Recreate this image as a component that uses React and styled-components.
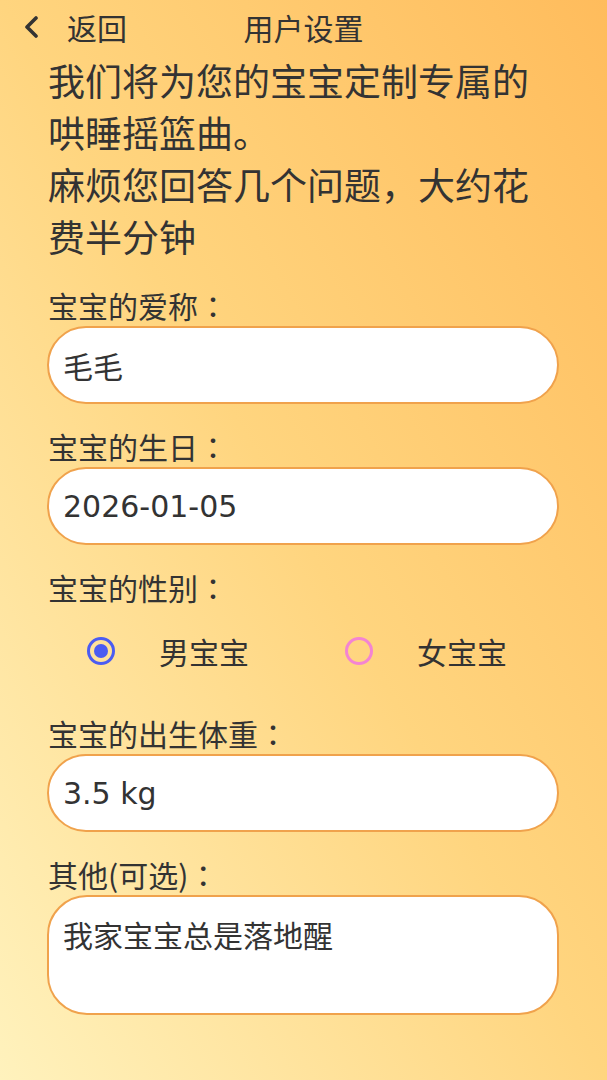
import React from 'react'
import styled, { createGlobalStyle } from 'styled-components'

const GlobalStyle = createGlobalStyle`
  * {
    box-sizing: border-box;
  }
  html, body {
    margin: 0;
    padding: 0;
  }
  body {
    font-family: 'Noto Sans CJK SC', 'Noto Sans', sans-serif;
    color: #333333;
  }
`

const Page = styled.div`
  min-height: 100vh;
  background: linear-gradient(to bottom left, #ffbc5c 0%, #ffd57f 50%, #fff2bd 100%);
  padding-bottom: 40px;
`

const Header = styled.header`
  display: grid;
  grid-template-columns: 1fr auto 1fr;
  align-items: center;
  height: 54px;
`

const BackButton = styled.button`
  display: flex;
  align-items: center;
  gap: 29px;
  justify-self: start;
  padding: 0 0 0 24px;
  border: none;
  background: none;
  font-family: inherit;
  font-size: 30px;
  line-height: 36px;
  color: #333333;
  cursor: pointer;
`

const Title = styled.h1`
  margin: 0;
  font-size: 30px;
  line-height: 36px;
  font-weight: 400;
`

const Content = styled.main`
  padding: 0 48px 0 47px;
`

const Intro = styled.p`
  margin: 0;
  padding-left: 1px;
  font-size: 37px;
  line-height: 52px;
`

const Field = styled.section`
  margin-top: ${p => p.$first ? '25px' : '24px'};
`

const Label = styled.div`
  padding-left: 1px;
  font-size: 30px;
  line-height: 36px;
  margin-bottom: 3px;
`

// full-width colon drawn centred in its box, as in the app
const Colon = styled.span`
  font-family: 'Noto Sans CJK JP', 'Noto Sans CJK SC', sans-serif;
`

const TextInput = styled.input`
  display: block;
  width: 100%;
  height: 78px;
  padding: 0 14px;
  border: 2px solid #f0a24c;
  border-radius: 39px;
  background: #ffffff;
  font-family: 'DejaVu Sans', 'Noto Sans CJK SC', sans-serif;
  font-size: 30px;
  color: #333333;
  outline: none;
`

const TextArea = styled.textarea`
  display: block;
  width: 100%;
  height: 120px;
  padding: 22px 14px;
  border: 2px solid #f0a24c;
  border-radius: 40px;
  background: #ffffff;
  font-family: 'DejaVu Sans', 'Noto Sans CJK SC', sans-serif;
  font-size: 30px;
  line-height: 36px;
  color: #333333;
  resize: none;
  outline: none;
`

const RadioGroup = styled.div`
  display: grid;
  grid-template-columns: 258px 1fr;
  align-items: center;
  height: 64px;
  margin: 14px 0 32px;
  padding-left: 40px;
`

const Option = styled.label`
  display: flex;
  align-items: center;
  gap: 44px;
  font-size: 30px;
  line-height: 36px;
  cursor: pointer;
`

const Dot = styled.span`
  position: relative;
  width: 28px;
  height: 28px;
  border-radius: 50%;
  border: 3px solid ${p => p.$color};
  flex-shrink: 0;
  &::after {
    content: '';
    display: ${p => p.$checked ? 'block' : 'none'};
    position: absolute;
    top: 4px;
    left: 4px;
    width: 14px;
    height: 14px;
    border-radius: 50%;
    background: ${p => p.$color};
  }
`

const Chevron = () => (
  <svg width='14' height='22' viewBox='0 0 14 22'>
    <path
      d='M12 2 L3 11 L12 20'
      fill='none'
      stroke='#333333'
      strokeWidth='3.6'
      strokeLinecap='round'
      strokeLinejoin='round'
    />
  </svg>
)

const App = () => {
  return (
    <Page>
      <GlobalStyle />
      <Header>
        <BackButton>
          <Chevron />
          返回
        </BackButton>
        <Title>用户设置</Title>
        <span />
      </Header>
      <Content>
        <Intro>
          我们将为您的宝宝定制专属的哄睡摇篮曲。
          <br />
          麻烦您回答几个问题，大约花费半分钟
        </Intro>

        <Field $first>
          <Label>宝宝的爱称<Colon>：</Colon></Label>
          <TextInput defaultValue='毛毛' />
        </Field>

        <Field>
          <Label>宝宝的生日<Colon>：</Colon></Label>
          <TextInput defaultValue='2026-01-05' />
        </Field>

        <Field>
          <Label>宝宝的性别<Colon>：</Colon></Label>
          <RadioGroup>
            <Option>
              <Dot $color='#4b5cf2' $checked />
              男宝宝
            </Option>
            <Option>
              <Dot $color='#f484d2' />
              女宝宝
            </Option>
          </RadioGroup>
        </Field>

        <Field>
          <Label>宝宝的出生体重<Colon>：</Colon></Label>
          <TextInput defaultValue='3.5 kg' />
        </Field>

        <Field>
          <Label>其他(可选)<Colon>：</Colon></Label>
          <TextArea defaultValue='我家宝宝总是落地醒' />
        </Field>
      </Content>
    </Page>
  )
}

export default App
